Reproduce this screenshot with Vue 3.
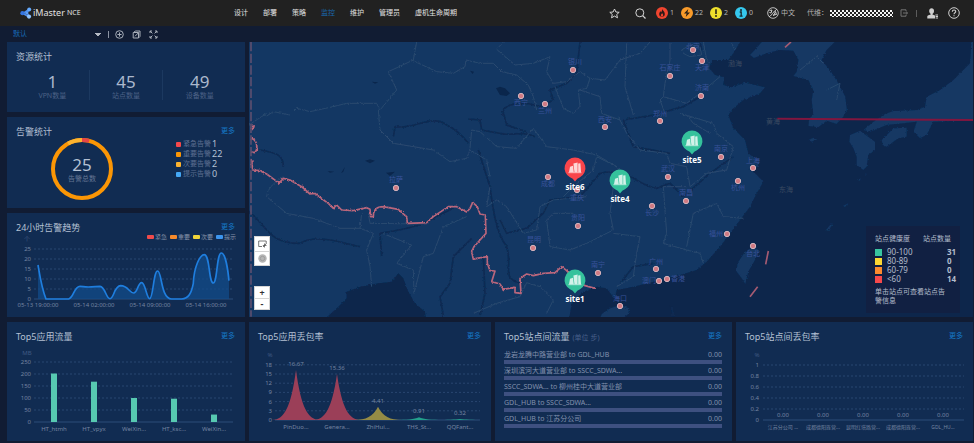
<script setup>
import { ref } from 'vue'

const navItems = ['设计', '部署', '策略', '监控', '维护', '管理员', '虚机生命周期']
const view = ref('默认')

const stats = [
  { value: 1, label: 'VPN数量' },
  { value: 45, label: '站点数量' },
  { value: 49, label: '设备数量' }
]
const alarms = [
  { label: '紧急告警', value: 1, tone: 'red' },
  { label: '重要告警', value: 22, tone: 'orange' },
  { label: '次要告警', value: 2, tone: 'yellow' },
  { label: '提示告警', value: 0, tone: 'blue' }
]
const trendLegend = [
  { label: '紧急', color: '#f04b4b', x: 140 },
  { label: '重要', color: '#f58a2b', x: 163 },
  { label: '次要', color: '#efd43a', x: 186 },
  { label: '提示', color: '#3d95ee', x: 209 }
]
const trendTimes = ['05-13 19:00:00', '05-14 02:00:00', '05-14 09:00:00', '05-14 16:00:00']
const trendLine =
  'M114 165C120 200 125 235 138 267H206C222 262 222 229 240 229C250 229 250 231 265 231S290 229 300 229C316 230 318 266 330 266C342 266 342 228 362 227C384 227 388 249 401 249C412 249 414 218 425 218C436 218 440 266 449 266C460 266 460 183 473 183C486 183 482 267 515 267H545C566 266 574 250 580 220C582 170 600 134 613 134C630 134 626 219 640 219C652 219 650 129 664 129C676 129 684 180 687 212'

const bars = [
  { name: 'HT_htmh', value: 202 },
  { name: 'HT_vpyx', value: 168 },
  { name: 'WeiXin...', value: 100 },
  { name: 'HT_ksc...', value: 97 },
  { name: 'WeiXin...', value: 31 }
]
const loss = [
  { name: 'PinDuo...', value: 16.67, color: '#9b3f58' },
  { name: 'Genera...', value: 15.36, color: '#9b3f58' },
  { name: 'ZhiHui...', value: 4.41, color: '#948b45' },
  { name: 'THS_St...', value: 0.91, color: '#23a08c' },
  { name: 'QQFant...', value: 0.32, color: '#23a08c' }
]
function peak(i, value) {
  const x = 47 + i * 41
  const y = 77 - value * 3
  const m = 77 - value * 0.75
  return `M${x - 24} 77C${x - 12} 77 ${x - 5} ${m} ${x} ${y}C${x + 5} ${m} ${x + 12} 77 ${x + 24} 77Z`
}
const flows = [
  '龙岩龙腾中路营业部 to GDL_HUB',
  '深圳滨河大道营业部 to SSCC_SDWA...',
  'SSCC_SDWA... to 柳州桂中大道营业部',
  'GDL_HUB to SSCC_SDWA...',
  'GDL_HUB to 江苏分公司'
]
const siteLoss = ['江苏分公司 ...', '成都德阳旌营...', '昆明红塔路营...', '成都德阳旌营...', 'GDL_HU...']

const cities = [
  { n: '银川', x: 573, y: 70, lx: 575, ly: 62 },
  { n: '西宁', x: 521, y: 96, lx: 521, ly: 103 },
  { n: '兰州', x: 545, y: 104, lx: 545, ly: 111 },
  { n: '北京', x: 693, y: 50, lx: 693, ly: 47 },
  { n: '天津', x: 702, y: 61, lx: 702, ly: 68 },
  { n: '石家庄', x: 670, y: 76, lx: 670, ly: 68 },
  { n: '济南', x: 701, y: 96, lx: 702, ly: 88 },
  { n: '西安', x: 605, y: 127, lx: 605, ly: 120 },
  { n: '郑州', x: 660, y: 121, lx: 660, ly: 114 },
  { n: '拉萨', x: 396, y: 188, lx: 396, ly: 180 },
  { n: '成都', x: 548, y: 177, lx: 548, ly: 184 },
  { n: '重庆', x: 577, y: 190, lx: 577, ly: 198 },
  { n: '贵阳', x: 578, y: 226, lx: 578, ly: 218 },
  { n: '昆明', x: 533, y: 248, lx: 534, ly: 240 },
  { n: '南宁', x: 598, y: 273, lx: 598, ly: 265 },
  { n: '长沙', x: 652, y: 206, lx: 652, ly: 213 },
  { n: '武汉', x: 668, y: 177, lx: 668, ly: 169 },
  { n: '南昌', x: 686, y: 201, lx: 686, ly: 193 },
  { n: '南京', x: 721, y: 157, lx: 721, ly: 149 },
  { n: '上海', x: 753, y: 168, lx: 753, ly: 161 },
  { n: '杭州', x: 738, y: 181, lx: 738, ly: 188 },
  { n: '福州', x: 727, y: 234, lx: 716, ly: 234 },
  { n: '台北', x: 753, y: 246, lx: 753, ly: 254 },
  { n: '广州', x: 656, y: 269, lx: 656, ly: 262 },
  { n: '澳门', x: 659, y: 281, lx: 649, ly: 281 },
  { n: '香港', x: 667, y: 279, lx: 678, ly: 279 },
  { n: '海口', x: 620, y: 306, lx: 620, ly: 299 }
]
const seas = [
  { n: '渤海', x: 735, y: 64 },
  { n: '黄海', x: 773, y: 122 },
  { n: '东海', x: 786, y: 190 }
]
const sites = [
  { n: 'site6', x: 575, y: 168, c: '#f9454b' },
  { n: 'site4', x: 620, y: 180, c: '#35c29c' },
  { n: 'site5', x: 692, y: 141, c: '#35c29c' },
  { n: 'site1', x: 575, y: 280, c: '#35c29c' }
]
const health = [
  { range: '90-100', count: '31', tone: 'green' },
  { range: '80-89', count: '0', tone: 'lemon' },
  { range: '60-79', count: '0', tone: 'amber' },
  { range: '<60', count: '14', tone: 'red' }
]
</script>

<template>
  <div class="page">
    <header class="top">
      <a class="brand" href="#">
        <svg width="12" height="12" viewBox="0 0 12 12">
          <path d="M3 6.3L8.2 3M3 6.5L8.5 9.5M8.5 3L7.4 6L9 9.5" stroke="#4b8df0" stroke-width="1.5" fill="none" />
          <circle cx="2.4" cy="6.2" r="2.1" fill="#3474e0" />
          <circle cx="9.2" cy="2.4" r="2" fill="#65abff" />
          <circle cx="9" cy="9.6" r="2.1" fill="#8fc3ff" />
          <circle cx="6.6" cy="6" r="1.5" fill="#5b9cf5" />
        </svg>
        <span class="brand-name">iMaster</span><span class="brand-sub">NCE</span>
      </a>
      <nav class="nav">
        <a v-for="item in navItems" :key="item" href="#" :class="{ active: item === '监控' }">{{ item }}</a>
      </nav>
      <div class="tools">
        <button class="tool star" aria-label="收藏">
          <svg width="11" height="11" viewBox="0 0 11 11"><path d="M5.5 1L6.9 4L10.2 4.3L7.7 6.5L8.5 9.8L5.5 8.1L2.5 9.8L3.3 6.5L.8 4.3L4.1 4Z" fill="none" stroke="#d5d5d5" stroke-width="1" /></svg>
        </button>
        <button class="tool search" aria-label="搜索">
          <svg width="11" height="11" viewBox="0 0 11 11"><circle cx="4.8" cy="4.8" r="4" fill="none" stroke="#d5d5d5" /><path d="M7.7 7.7L10.5 10.5" stroke="#d5d5d5" stroke-width="1.2" /></svg>
        </button>
        <div class="alerts">
          <a class="alert" href="#" aria-label="紧急">
            <svg width="12" height="12" viewBox="0 0 12 12"><circle cx="6" cy="6" r="6" fill="#f0452f" /><path d="M6.2 1.8C6.4 3.5 8.8 4.6 8.8 7A2.8 2.8 0 0 1 3.2 7C3.2 5.6 4 5.1 4.3 4.2C4.9 4.6 5 5 5 5.4C5.8 4.6 6.3 3.4 6.2 1.8Z" fill="#2b1a17" /><path d="M6 6C6.5 7 7.2 7.2 7.2 8.2A1.2 1.2 0 0 1 4.8 8.2C4.8 7.3 5.8 7 6 6Z" fill="#f0452f" /></svg>1
          </a>
          <a class="alert" href="#" aria-label="重要">
            <svg width="12" height="12" viewBox="0 0 12 12"><circle cx="6" cy="6" r="6" fill="#f99b2a" /><path d="M7.3 2L3 6.6H5.6L4.7 10L9 5.4H6.4Z" fill="#2b2117" /></svg>22
          </a>
          <a class="alert" href="#" aria-label="次要">
            <svg width="12" height="12" viewBox="0 0 12 12"><circle cx="6" cy="6" r="6" fill="#eee02c" /><path d="M6 2.3V7" stroke="#2b2917" stroke-width="1.6" /><circle cx="6" cy="9" r="1" fill="#2b2917" /></svg>2
          </a>
          <a class="alert" href="#" aria-label="提示">
            <svg width="12" height="12" viewBox="0 0 12 12"><circle cx="6" cy="6" r="6" fill="#35c8ee" /><circle cx="6" cy="3" r="1" fill="#17262b" /><path d="M4.7 5H6.2V9M4.5 9.1H7.6" fill="none" stroke="#17262b" stroke-width="1.3" /></svg>0
          </a>
        </div>
        <a class="lang" href="#">
          <svg width="12" height="12" viewBox="0 0 12 12" fill="none" stroke="#cfcfcf"><circle cx="6" cy="6" r="5.3" stroke-width=".9" /><path d="M2 9.8C4 9 5 7 6 5.6L10 2M6.5 9L8.5 4.5L9.5 7.5L6 8M2.5 3.5L5 3L4 6L2.4 5.5" /></svg>中文
        </a>
        <span class="tenant">代维：
          <svg class="mask" width="63" height="7" aria-hidden="true">
            <defs><pattern id="chk" width="4" height="4" patternUnits="userSpaceOnUse"><path d="M0 0H2V2H0ZM2 2H4V4H2Z" fill="#f2f2f2" /></pattern></defs>
            <rect width="63" height="7" fill="url(#chk)" />
          </svg>
        </span>
        <button class="tool exit" aria-label="退出">
          <svg width="8" height="8" viewBox="0 0 8 8" fill="none" stroke="#7a7a7a" stroke-width=".9"><path d="M6 2.2V.8H1V7.2H6V5.8M3 4H7.6M6.2 2.8L7.5 4L6.2 5.2" /></svg>
        </button>
        <i class="sep"></i>
        <button class="tool user" aria-label="用户">
          <svg width="11" height="11" viewBox="0 0 11 11" fill="#cfcfcf"><ellipse cx="4.6" cy="3.1" rx="2.4" ry="2.8" /><path d="M3.7 5H5.5V6.6L8 7.6V10.4H.3V8.3Q.4 7.5 1.4 7.2L3.7 6.4Z" /><path d="M8.4 6.6H11V7.4H8.4ZM8.6 8.1H11V8.9H8.6ZM8.6 9.6H11V10.4H8.6Z" /></svg>
        </button>
        <button class="tool help" aria-label="帮助">
          <svg width="12" height="12" viewBox="0 0 12 12" fill="none" stroke="#cfcfcf"><circle cx="6" cy="6" r="5.3" /><path d="M4.3 4.8C4.3 2.4 7.8 2.6 7.7 4.6C7.6 5.8 6 5.7 6 7.2M6 8.2V9.3" stroke-width="1.1" /></svg>
        </button>
      </div>
    </header>

    <div class="toolbar">
      <select v-model="view" class="view-select" aria-label="视图"><option>默认</option></select>
      <i class="sep light"></i>
      <button class="tool" aria-label="新增">
        <svg width="9" height="9" viewBox="0 0 9 9" fill="none" stroke="#a9afba"><circle cx="4.5" cy="4.5" r="3.8" /><path d="M4.5 2.4V6.6M2.4 4.5H6.6" /></svg>
      </button>
      <button class="tool" aria-label="编辑">
        <svg width="9" height="9" viewBox="0 0 9 9" fill="none" stroke="#a9afba"><path d="M2 2.2L3.2 1H8V6.4L6.8 7.8M1.2 2.5H6.5V8H1.2ZM3 6.3L6.6 2.6" /></svg>
      </button>
      <button class="tool" aria-label="全屏">
        <svg width="9" height="9" viewBox="0 0 9 9" fill="none" stroke="#a9afba"><path d="M1 3V1H3M6 1H8V3M8 6V8H6M3 8H1V6M1 1L3.4 3.4M8 1L5.6 3.4M8 8L5.6 5.6M1 8L3.4 5.6" /></svg>
      </button>
    </div>

    <main class="board">
      <div class="stack">
        <section class="card">
          <div class="head"><h2>资源统计</h2></div>
          <div class="stats">
            <div v-for="s in stats" :key="s.label" class="stat"><b>{{ s.value }}</b><span>{{ s.label }}</span></div>
          </div>
        </section>

        <section class="card">
          <div class="head"><h2>告警统计</h2><a href="#" class="more">更多</a></div>
          <div class="alarm-body">
            <svg width="62" height="62" viewBox="0 0 62 62">
              <g fill="none" stroke-width="4" transform="rotate(-90 31 31)">
                <circle cx="31" cy="31" r="29" stroke="#fb9605" />
                <circle cx="31" cy="31" r="29" stroke="#e64545" pathLength="100" stroke-dasharray="4 96" />
                <circle cx="31" cy="31" r="29" stroke="#fcb32f" pathLength="100" stroke-dasharray="8 92" stroke-dashoffset="-92" />
              </g>
              <text class="total" x="31" y="33">25</text>
              <text class="total-label" x="31" y="43">告警总数</text>
            </svg>
            <ul class="alarm-list">
              <li v-for="a in alarms" :key="a.label"><i class="dot" :class="a.tone"></i><span>{{ a.label }}</span><b>{{ a.value }}</b></li>
            </ul>
          </div>
        </section>

        <section class="card">
          <div class="head"><h2>24小时告警趋势</h2><a href="#" class="more">更多</a></div>
          <svg class="chart" viewBox="0 0 238 83">
            <text class="unit" x="20" y="7" text-anchor="middle">个</text>
            <g v-for="l in trendLegend" :key="l.label">
              <rect :x="l.x" y="1" width="7" height="4" rx="1" :fill="l.color" />
              <text class="key" :x="l.x + 8" y="5">{{ l.label }}</text>
            </g>
            <g v-for="n in 6" :key="n">
              <path :class="n === 1 ? 'axis' : 'gridline'" :d="`M27 ${75 - n * 10}H226`" />
              <text class="tick" x="24" :y="77 - n * 10" text-anchor="end">{{ (n - 1) * 5 }}</text>
            </g>
            <g transform="translate(-7 -24) scale(.3333)">
              <path :d="trendLine + 'V267H114Z'" fill="#124b8a" fill-opacity=".75" />
              <path :d="trendLine" fill="none" stroke="#1f7ede" stroke-width="5" />
            </g>
            <text v-for="(t, i) in trendTimes" :key="t" class="tick" :x="31 + i * 56" y="73" text-anchor="middle">{{ t }}</text>
          </svg>
        </section>
      </div>

      <section class="map">
        <svg class="map-canvas" viewBox="249 42 724 275" preserveAspectRatio="xMidYMid slice">
          <defs>
            <filter id="rough" x="-5%" y="-5%" width="110%" height="110%">
              <feTurbulence type="fractalNoise" baseFrequency=".16" numOctaves="3" seed="4" />
              <feDisplacementMap in="SourceGraphic" scale="8" xChannelSelector="R" yChannelSelector="G" />
            </filter>
          </defs>
          <svg x="249" y="42" width="724" height="275" viewBox="747 126 2172 825">
            <rect x="747" y="126" width="2172" height="825" fill="#133763" />
            <g filter="url(#rough)">
              <path fill="#0a264c" d="M2230 110L2200 160L2185 180L2135 180L2128 205L2145 225L2172 232L2170 255L2195 262L2235 248L2295 262L2280 280L2230 300L2200 325L2185 345L2200 385L2235 420L2245 460L2270 480L2278 500L2245 507L2265 520L2290 545L2270 580L2250 620L2220 660L2190 700L2160 740L2120 785L2090 810L2040 825L2000 835L1960 845L1900 860L1850 870L1845 895L1835 885L1820 865L1790 860L1750 875L1715 910L1705 970H2940V110Z" />
              <path fill="#0a264c" d="M960 970L1015 920L1040 895L1040 875L1080 860L1135 850L1175 845L1195 820L1210 835L1225 875L1245 910L1275 935L1280 970Z" />
              <g fill="#133763">
                <path d="M2300 110L2250 165L2262 174L2300 160L2340 150L2380 152L2395 180L2390 215L2380 228L2425 240L2440 270L2435 300L2440 345L2428 355L2425 378L2455 382L2480 362L2510 372L2530 350L2541 330L2536 290L2515 250L2490 210L2465 180L2480 150L2520 110Z" />
                <path d="M2550 405L2580 392L2625 425L2625 450L2605 465L2600 500L2590 510L2570 495L2570 470L2560 445L2548 425Z" />
                <path d="M2645 420L2680 385L2720 383L2720 410L2695 415L2660 440L2648 435Z" />
                <path d="M2590 390L2620 365L2655 342L2680 333L2750 330L2775 320L2780 290L2820 270L2860 240L2890 210L2910 190L2915 110H2960V360L2800 365L2780 405L2760 415L2740 395L2750 365L2710 370L2660 375L2610 395Z" />
                <path d="M2425 420L2440 413L2452 418L2435 425Z" />
                <path d="M2265 735L2277 755L2265 780L2245 815L2236 852L2225 835L2210 815L2212 790L2235 755Z" />
                <path d="M1830 925L1860 915L1888 925L1885 942L1870 955H1800L1805 942Z" />
                <path d="M2478 690L2490 675L2498 673L2485 693ZM2528 618L2545 610L2540 620ZM2573 540L2582 535L2580 542ZM2595 528L2597 520L2600 522Z" />
              </g>
            </g>
            <g fill="#0a264c">
              <path d="M1488 265L1500 260L1515 265L1530 280L1520 288L1500 285ZM1410 212L1422 215L1418 222ZM1115 245L1135 247L1125 251ZM1095 482L1110 478L1125 482L1110 490ZM1158 518L1185 515L1170 528ZM983 513L1003 515L990 518ZM1023 520L1035 500L1030 515Z" />
            </g>
            <g class="river" filter="url(#rough)">
              <path d="M735 630C800 660 790 730 900 730C950 700 1030 730 1080 740M1145 770L1140 700C1200 690 1260 680 1300 655L1360 625M780 450C840 460 850 470 850 500M1180 410L1185 380C1240 390 1300 340 1340 375C1370 390 1390 410 1405 430M1405 357L1440 360L1445 390L1500 400C1540 410 1560 390 1605 410M1508 330L1520 375L1580 395" />
              <path d="M1505 345C1510 310 1560 300 1620 320L1660 300L1650 270L1700 250L1730 220L1740 126M2100 126L2105 150M1435 450L1470 560C1480 640 1490 700 1520 740C1540 800 1500 830 1560 850M1415 715L1400 730L1360 770L1350 850L1320 890L1330 948M1450 770L1455 880L1440 948M1500 660L1520 700L1580 685L1630 640L1650 600L1740 590L1800 520C1880 500 1920 560 1970 565L2010 550L2050 590L2130 520L2200 470" />
              <path d="M2020 950L2015 920M2100 290L2050 320L1960 345L1870 360M1870 360L1900 440L2010 460M1860 850L1900 800L1960 790" />
            </g>
            <g class="border" filter="url(#rough)">
              <path d="M800 348L820 335L870 345L890 325L930 335L990 322L1040 310L1130 310L1140 330L1190 270L1165 215L1240 180L1250 126M1235 180L1310 215L1360 220L1395 200L1398 180L1440 190L1480 190L1505 215L1550 225L1585 255L1600 290L1610 330" />
              <path d="M1510 126L1490 148L1545 195L1600 190L1650 170L1640 215L1660 250L1700 245L1740 215L1770 235L1815 240L1860 180L1920 160L1950 126M1665 260L1690 325L1720 340L1740 320L1735 270L1760 265L1770 235M1740 270L1800 290L1805 340L1860 360M1880 130L1875 260L1900 345" />
              <path d="M745 376L800 340M1135 330L1140 390L1180 430L1300 450L1350 485L1400 475L1410 450L1460 480L1470 530M1410 445L1415 390L1440 395L1490 440L1550 445L1570 420L1600 385L1640 440L1720 450L1790 465L1850 500" />
              <path d="M850 530Q800 560 800 590L860 640L940 655L1020 685L1080 685L1085 640M1080 685L1120 700L1100 750L1110 800L1115 860M1150 700L1160 705L1235 735L1190 790L1240 810L1242 880L1270 770L1300 760L1330 680L1400 650M1105 640L1110 670L1280 672" />
              <path d="M1470 560L1460 620L1490 600L1520 620L1570 700L1610 690L1620 620L1660 600L1760 590M1850 500L1790 470L1780 510L1720 560L1690 590M1850 500L1870 530L1840 560L1830 640L1840 690L1760 730L1710 750L1650 740L1640 660L1660 640L1720 640" />
              <path d="M1855 350L1880 400L1920 450L2000 460L2010 490L2060 500L2070 560L2120 520L2180 510L2200 440L2150 400L2140 370L2040 340M2060 560L1990 560L2000 700L1990 730L2060 750L2100 760L2110 790M2060 740L2080 640L2150 610L2170 650L2230 655M1840 700L1920 710L1910 760L1900 830L1850 860" />
              <path d="M1995 340L1980 300L1990 290L2060 310L2100 280L2160 230M1990 290L1995 250L2010 180L2010 126M2045 150L2070 135L2100 140L2105 165L2070 170L2050 160ZM2110 126L2120 180L2130 190M2195 130L2205 150M2060 345L2080 370L2130 400M1580 848L1620 860L1660 900L1640 940M1580 848L1560 890L1490 910L1420 940M2400 210L2450 170L2470 190M2480 270L2520 250L2510 300" />
            </g>
            <g class="frontier" filter="url(#rough)">
              <path d="M755 375L762 380L755 390M755 415C772 420 775 450 764 458L754 456M755 480L758 510L780 512L800 522L838 550L850 535L870 540L905 560L930 582L945 580L975 603L985 610L1000 625L1010 615L1025 630L1060 632L1100 623L1110 628L1112 650L1120 650C1120 620 1140 620 1150 620L1195 628L1208 640L1220 650L1222 670L1280 668L1300 650L1345 620L1370 620L1400 636L1410 625L1418 607L1432 620L1440 642L1456 645L1458 700L1440 720L1422 740L1415 755L1420 778L1430 775L1462 770L1462 790L1470 812L1485 813L1475 845L1500 852L1510 868L1545 862L1545 878L1563 880L1560 835L1580 822L1600 827L1630 820L1665 818L1685 800L1700 812L1725 840L1755 857L1785 865" />
            </g>
            <path class="dash-line" d="M753 126V950" />
            <path d="M2305 753L2297 793M2273 860L2250 890M2355 142L2373 126" stroke="#a55b72" stroke-width="5" />
            <path d="M2332 356L2920 360" stroke="#81163f" stroke-width="6" />
          </svg>
          <g v-for="c in cities" :key="c.n">
            <text class="city" :x="c.lx" :y="c.ly + 2">{{ c.n }}</text>
            <circle :cx="c.x" :cy="c.y" r="2.7" fill="#d17b84" stroke="#d4b4bd" />
          </g>
          <text v-for="s in seas" :key="s.n" class="sea" :x="s.x" :y="s.y + 2">{{ s.n }}</text>
          <g v-for="s in sites" :key="s.n" :transform="`translate(${s.x} ${s.y})`">
            <path d="M0 -10.5A10.5 10.5 0 0 1 5 9.2Q2 10 0 13.5Q-2 10 -5 9.2A10.5 10.5 0 0 1 0 -10.5Z" :fill="s.c" />
            <path d="M-6 4.2L-5 -1.2L-2 -2.2L-1.2 4.2ZM-1.6 -4.6L2.6 -5.6V4.2H-.6ZM3.2 -4.4L5.4 -4.8L6 4.2H3.2Z" fill="#fff" fill-opacity=".78" />
            <path d="M-6.6 4.7H6.4" stroke="#fff" stroke-opacity=".6" />
            <text class="site" x="0" y="22">{{ s.n }}</text>
          </g>
        </svg>
        <div class="map-btns draw">
          <button aria-label="框选"><svg width="9" height="8" viewBox="0 0 9 8" fill="none" stroke="#555"><path d="M.7 4V1H8.2V4M.7 4V6.5H4M6.5 3.5V7.5M4.8 5.5H8.5M5 7L8 4" stroke-width=".8" /></svg></button>
          <button aria-label="定位"><svg width="9" height="9" viewBox="0 0 9 9"><circle cx="4.5" cy="4.5" r="4.2" fill="#b5b5b5" /><circle cx="4.5" cy="4.5" r="2.2" fill="none" stroke="#9d9d9d" /></svg></button>
        </div>
        <div class="map-btns zoom">
          <button>+</button>
          <button>-</button>
        </div>
        <div class="legend">
          <table>
            <thead><tr><th>站点健康度</th><th>站点数量</th></tr></thead>
            <tbody>
              <tr v-for="h in health" :key="h.range"><td><i class="swatch" :class="h.tone"></i>{{ h.range }}</td><td class="count">{{ h.count }}</td></tr>
            </tbody>
          </table>
          <p>单击站点可查看站点告警信息</p>
        </div>
      </section>

      <section class="card">
        <div class="head"><h2>Top5应用流量</h2><a href="#" class="more">更多</a></div>
        <svg class="chart" viewBox="0 0 238 98">
          <text class="unit" x="20" y="12" text-anchor="middle">MB</text>
          <g v-for="n in 6" :key="n">
            <path :class="n === 1 ? 'axis' : 'gridline'" :d="`M27 ${91 - n * 12}H226`" />
            <text class="tick" x="24" :y="93 - n * 12" text-anchor="end">{{ (n - 1) * 50 }}</text>
          </g>
          <g v-for="(b, i) in bars" :key="i">
            <rect :x="44 + i * 40" :y="79 - b.value * 0.24" width="6" :height="b.value * 0.24" fill="#57c9b1" />
            <text class="tick" :x="47 + i * 40" y="88" text-anchor="middle">{{ b.name }}</text>
          </g>
        </svg>
      </section>

      <section class="card">
        <div class="head"><h2>Top5应用丢包率</h2><a href="#" class="more">更多</a></div>
        <svg class="chart" viewBox="0 0 242 98">
          <text class="unit" x="21" y="14" text-anchor="middle">%</text>
          <g v-for="n in 7" :key="n">
            <path :class="n === 1 ? 'axis' : 'gridline'" :d="`M26 ${86.2 - n * 9.2}H231`" />
            <text class="tick" x="23" :y="88.2 - n * 9.2" text-anchor="end">{{ (n - 1) * 3 }}</text>
          </g>
          <g v-for="(p, i) in loss" :key="p.name">
            <path :d="peak(i, p.value)" :fill="p.color" />
            <text class="tick" :x="47 + i * 41" :y="73 - p.value * 3" text-anchor="middle">{{ p.value.toFixed(2) }}</text>
            <text class="tick" :x="47 + i * 41" y="86" text-anchor="middle">{{ p.name }}</text>
          </g>
        </svg>
      </section>

      <section class="card">
        <div class="head"><h2>Top5站点间流量<small>(单位 步)</small></h2><a href="#" class="more">更多</a></div>
        <ul class="flows">
          <li v-for="f in flows" :key="f"><div><span>{{ f }}</span><span>0.00</span></div><i class="track"></i></li>
        </ul>
      </section>

      <section class="card">
        <div class="head"><h2>Top5站点间丢包率</h2><a href="#" class="more">更多</a></div>
        <svg class="chart" viewBox="0 0 237 98">
          <text class="unit" x="21" y="14" text-anchor="middle">%</text>
          <g v-for="n in 6" :key="n">
            <path :class="n === 1 ? 'axis' : 'gridline'" :d="`M27 ${88 - n * 11}H228`" />
            <text class="tick" x="23" :y="90 - n * 11" text-anchor="end">{{ ((n - 1) * 2) / 10 }}</text>
          </g>
          <g v-for="(s, i) in siteLoss" :key="i">
            <text class="tick" :x="47 + i * 40" y="74" text-anchor="middle">0.00</text>
            <text class="tick small" :x="47 + i * 40" y="86" text-anchor="middle">{{ s }}</text>
          </g>
        </svg>
      </section>
    </main>
  </div>
</template>

<style>
body {
  background: #111c33;
}
</style>

<style scoped>
.page {
  font-family: "Noto Sans", "Noto Sans CJK SC", sans-serif;
  font-size: 7px;
  line-height: 8px;
  color: #8d9cb8;
  background: #111c33;
  padding-bottom: 2px;
}
.page * {
  box-sizing: border-box;
}
svg {
  display: block;
  flex: none;
}
a {
  color: inherit;
  text-decoration: none;
}
ul {
  list-style: none;
  margin: 0;
  padding: 0;
}
button {
  font: inherit;
  border: 0;
  padding: 0;
  background: none;
  cursor: pointer;
}
.top {
  display: flex;
  align-items: center;
  height: 26px;
  padding: 0 14px 0 20px;
  background: #212121;
  color: #e2e2e2;
}
.brand {
  display: flex;
  align-items: center;
  flex: 0 0 214px;
}
.brand-name {
  font-size: 9px;
  line-height: 12px;
  margin: 0 2px 0 1px;
}
.nav {
  display: flex;
  gap: 15px;
  white-space: nowrap;
}
.nav .active {
  color: #1966ac;
}
.tools {
  display: flex;
  align-items: center;
  margin-left: auto;
  white-space: nowrap;
}
.star {
  margin-right: 15px;
}
.search {
  margin-right: 10px;
}
.alerts {
  display: flex;
  gap: 7px;
  margin-right: 14px;
}
.alert,
.lang {
  display: flex;
  align-items: center;
  gap: 2px;
  color: #b5b5b5;
}
.lang {
  margin-right: 12px;
}
.tenant {
  display: flex;
  align-items: center;
  color: #b5b5b5;
  margin-right: 7px;
}
.mask {
  margin-left: 2px;
}
.sep {
  width: 1px;
  height: 7px;
  background: #5c5c5c;
  margin: 0 10px 0 8px;
}
.sep.light {
  background: #8b93a3;
}
.user {
  margin-right: 10px;
}
.toolbar {
  display: flex;
  align-items: center;
  gap: 8px;
  height: 16px;
  padding-left: 13px;
}
.toolbar .sep {
  margin: 0 -2px 0 -2px;
}
.view-select {
  width: 89px;
  font: inherit;
  line-height: 8px;
  padding: 0;
  border: 0;
  appearance: none;
  color: #176bb5;
  background: linear-gradient(to bottom right, #b5bac4 50%, transparent 51%) no-repeat right 1px center / 3px 3px,
    linear-gradient(to bottom left, #b5bac4 50%, transparent 51%) no-repeat right 4px center / 3px 3px;
}
.board {
  display: grid;
  grid-template-columns: 238fr 242fr 237fr 237fr;
  gap: 5px 4px;
  padding: 0 1px 0 7px;
}
.stack {
  display: flex;
  flex-direction: column;
  gap: 5px;
  min-width: 0;
}
.card {
  background: #112c52;
  min-width: 0;
}
.head {
  display: flex;
  justify-content: space-between;
  padding: 9px 10px 0 9px;
}
.head h2 {
  margin: 0;
  font-size: 9px;
  font-weight: 400;
  line-height: 12px;
  color: #b4c0d3;
}
.head small {
  font-size: 7px;
  color: #48608a;
  margin-left: 3px;
}
.more {
  line-height: 10px;
  color: #1678c6;
}
.stats {
  display: grid;
  grid-template-columns: repeat(3, 1fr);
  padding: 7px 9px 12px 8px;
}
.stat {
  display: flex;
  flex-direction: column;
  align-items: center;
  padding-top: 2px;
  border-left: 1px solid #1c3960;
}
.stat:first-child {
  border-left-color: transparent;
}
.stat b {
  font-size: 17px;
  line-height: 20px;
  font-weight: 400;
  color: #abb8cd;
}
.stat span {
  color: #4c6186;
}
.total {
  font-size: 17px;
  fill: #b4c0d3;
  text-anchor: middle;
}
.total-label {
  font-size: 7px;
  fill: #657695;
  text-anchor: middle;
}
.alarm-body {
  display: flex;
  gap: 63px;
  padding: 0 0 8px 44px;
}
.alarm-list {
  padding-top: 1px;
}
.alarm-list li {
  display: flex;
  align-items: center;
  height: 10px;
}
.alarm-list span {
  color: #5d6f91;
}
.alarm-list b {
  font-size: 9px;
  line-height: 10px;
  font-weight: 400;
  color: #b4c0d3;
  margin-left: 1px;
}
.dot {
  width: 5px;
  height: 5px;
  border-radius: 1px;
  margin-right: 2px;
}
.red {
  background: #f5484b;
}
.orange {
  background: #fb9605;
}
.yellow {
  background: #fcb32f;
}
.blue {
  background: #45a8f5;
}
.green {
  background: #38c5a0;
}
.lemon {
  background: #fbd632;
}
.amber {
  background: #fb8a2e;
}
.chart {
  width: 100%;
  height: auto;
}
.tick {
  font-size: 6px;
  fill: #7484a1;
}
.tick.small {
  font-size: 5px;
}
.key {
  font-size: 6px;
  fill: #8793a8;
}
.unit {
  font-size: 6px;
  fill: #405a83;
}
.gridline {
  stroke: #294670;
  stroke-dasharray: 2 2;
}
.axis {
  stroke: #2d4d78;
}
.map {
  position: relative;
  grid-column: 2 / -1;
  overflow: hidden;
  background: #0a264c;
}
.map-canvas {
  position: absolute;
  inset: 0;
  width: 100%;
  height: 100%;
}
.river path {
  fill: none;
  stroke: #0c2a52;
  stroke-width: 5;
}
.border path {
  fill: none;
  stroke: #29496f;
  stroke-width: 3;
  stroke-linejoin: round;
}
.frontier path {
  fill: none;
  stroke: #b9667c;
  stroke-width: 5;
  stroke-linejoin: round;
}
.dash-line {
  stroke: #6d5472;
  stroke-width: 4;
  stroke-dasharray: 28 7;
}
.city {
  font-size: 7px;
  fill: #38529a;
  text-anchor: middle;
}
.sea {
  font-size: 7px;
  fill: #3b4a61;
  text-anchor: middle;
}
.site {
  font-size: 8px;
  font-weight: 700;
  fill: #fff;
  text-anchor: middle;
}
.map-btns {
  position: absolute;
  left: 5px;
  width: 16px;
  background: #fff;
  border: 1px solid #d5d5d5;
}
.map-btns button {
  display: flex;
  align-items: center;
  justify-content: center;
  width: 100%;
  height: 14px;
  color: #333;
  font-size: 9px;
  font-weight: 700;
}
.map-btns button + button {
  border-top: 1px solid #d5d5d5;
}
.map-btns.draw {
  bottom: 51px;
}
.map-btns.zoom {
  bottom: 7px;
}
.map-btns.zoom button {
  height: 11px;
}
.legend {
  position: absolute;
  right: 13px;
  bottom: 4px;
  width: 94px;
  padding: 8px 2px 8px 9px;
  background: #112042;
  color: #b3bccb;
}
.legend table {
  width: 100%;
  border-collapse: collapse;
}
.legend th,
.legend td {
  padding: 0;
  height: 9px;
  line-height: 9px;
  text-align: left;
  font-weight: 400;
  white-space: nowrap;
}
.legend th {
  height: 13px;
  vertical-align: top;
}
.legend th:first-child {
  width: 48px;
}
.legend td {
  font-size: 8px;
}
.legend .count {
  font-weight: 700;
  padding-left: 24px;
}
.swatch {
  display: inline-block;
  width: 7px;
  height: 7px;
  margin-right: 5px;
  vertical-align: -1px;
}
.legend p {
  margin: 4px 9px 0 0;
  line-height: 9px;
}
.flows {
  padding: 6px 10px 0 9px;
}
.flows li {
  height: 16px;
}
.flows div {
  display: flex;
  justify-content: space-between;
  line-height: 10px;
  white-space: nowrap;
  color: #8291ad;
}
.track {
  display: block;
  height: 4px;
  background: #3e5080;
}
</style>
